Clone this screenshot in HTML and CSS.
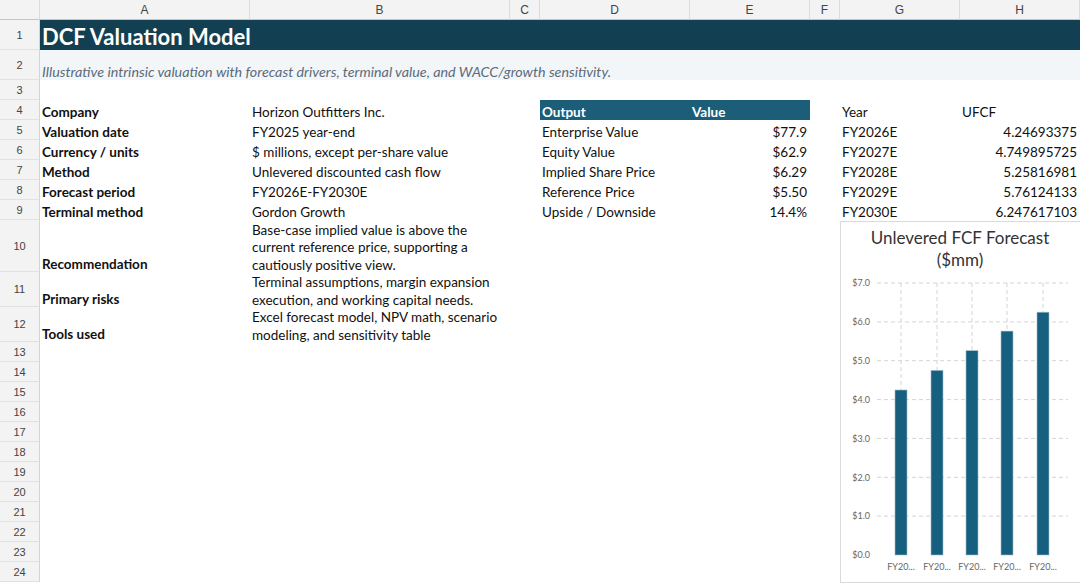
FILE: index.html
```html
<!DOCTYPE html>
<html lang="en">
<head>
  <meta charset="UTF-8">
  <meta name="viewport" content="width=device-width, initial-scale=1.0">
  <title>DCF Valuation Model</title>
  <link rel="stylesheet" href="styles.css">
</head>
<body>
  <div class="sheet">
    <div class="row col-head">
      <div class="corner"></div>
      <div class="ch">A</div>
      <div class="ch">B</div>
      <div class="ch">C</div>
      <div class="ch">D</div>
      <div class="ch">E</div>
      <div class="ch">F</div>
      <div class="ch">G</div>
      <div class="ch">H</div>
    </div>

    <div class="row h30">
      <div class="rh">1</div>
      <div class="cell title span-all">DCF Valuation Model</div>
    </div>
    <div class="row h30">
      <div class="rh">2</div>
      <div class="cell subtitle span-all">Illustrative intrinsic valuation with forecast drivers, terminal value, and WACC/growth sensitivity.</div>
    </div>
    <div class="row">
      <div class="rh">3</div>
    </div>

    <div class="row">
      <div class="rh">4</div>
      <div class="cell label">Company</div>
      <div class="cell">Horizon Outfitters Inc.</div>
      <div class="cell"></div>
      <div class="cell out-head">Output</div>
      <div class="cell out-head">Value</div>
      <div class="cell"></div>
      <div class="cell">Year</div>
      <div class="cell">UFCF</div>
    </div>
    <div class="row">
      <div class="rh">5</div>
      <div class="cell label">Valuation date</div>
      <div class="cell">FY2025 year-end</div>
      <div class="cell"></div>
      <div class="cell">Enterprise Value</div>
      <div class="cell num">$77.9</div>
      <div class="cell"></div>
      <div class="cell">FY2026E</div>
      <div class="cell num">4.24693375</div>
    </div>
    <div class="row">
      <div class="rh">6</div>
      <div class="cell label">Currency / units</div>
      <div class="cell">$ millions, except per-share value</div>
      <div class="cell"></div>
      <div class="cell">Equity Value</div>
      <div class="cell num">$62.9</div>
      <div class="cell"></div>
      <div class="cell">FY2027E</div>
      <div class="cell num">4.749895725</div>
    </div>
    <div class="row">
      <div class="rh">7</div>
      <div class="cell label">Method</div>
      <div class="cell">Unlevered discounted cash flow</div>
      <div class="cell"></div>
      <div class="cell">Implied Share Price</div>
      <div class="cell num">$6.29</div>
      <div class="cell"></div>
      <div class="cell">FY2028E</div>
      <div class="cell num">5.25816981</div>
    </div>
    <div class="row">
      <div class="rh">8</div>
      <div class="cell label">Forecast period</div>
      <div class="cell">FY2026E-FY2030E</div>
      <div class="cell"></div>
      <div class="cell">Reference Price</div>
      <div class="cell num">$5.50</div>
      <div class="cell"></div>
      <div class="cell">FY2029E</div>
      <div class="cell num">5.76124133</div>
    </div>
    <div class="row">
      <div class="rh">9</div>
      <div class="cell label">Terminal method</div>
      <div class="cell">Gordon Growth</div>
      <div class="cell"></div>
      <div class="cell">Upside / Downside</div>
      <div class="cell num">14.4%</div>
      <div class="cell"></div>
      <div class="cell">FY2030E</div>
      <div class="cell num">6.247617103</div>
    </div>
    <div class="row h52">
      <div class="rh">10</div>
      <div class="cell label">Recommendation</div>
      <div class="cell wrap"><span>Base-case implied value is above the current reference price, supporting a cautiously positive view.</span></div>
    </div>
    <div class="row h35">
      <div class="rh">11</div>
      <div class="cell label">Primary risks</div>
      <div class="cell wrap"><span>Terminal assumptions, margin expansion execution, and working capital needs.</span></div>
    </div>
    <div class="row h35">
      <div class="rh">12</div>
      <div class="cell label">Tools used</div>
      <div class="cell wrap"><span>Excel forecast model, NPV math, scenario modeling, and sensitivity table</span></div>
    </div>
    <div class="row"><div class="rh">13</div></div>
    <div class="row"><div class="rh">14</div></div>
    <div class="row"><div class="rh">15</div></div>
    <div class="row"><div class="rh">16</div></div>
    <div class="row"><div class="rh">17</div></div>
    <div class="row"><div class="rh">18</div></div>
    <div class="row"><div class="rh">19</div></div>
    <div class="row"><div class="rh">20</div></div>
    <div class="row"><div class="rh">21</div></div>
    <div class="row"><div class="rh">22</div></div>
    <div class="row"><div class="rh">23</div></div>
    <div class="row"><div class="rh">24</div></div>

    <!-- chart object floats over G10:H24 -->
    <div class="chart">
      <svg width="242" height="362" viewBox="0 0 242 362">
        <text class="chart-title" x="120" y="23">Unlevered FCF Forecast</text>
        <text class="chart-title" x="120" y="45">($mm)</text>

        <g class="grid">
          <line x1="37" y1="62" x2="228" y2="62"/>
          <line x1="37" y1="100.9" x2="228" y2="100.9"/>
          <line x1="37" y1="139.7" x2="228" y2="139.7"/>
          <line x1="37" y1="178.6" x2="228" y2="178.6"/>
          <line x1="37" y1="217.4" x2="228" y2="217.4"/>
          <line x1="37" y1="256.3" x2="228" y2="256.3"/>
          <line x1="37" y1="295.1" x2="228" y2="295.1"/>
          <line x1="61" y1="62" x2="61" y2="169"/>
          <line x1="97" y1="62" x2="97" y2="149"/>
          <line x1="132" y1="62" x2="132" y2="130"/>
          <line x1="167" y1="62" x2="167" y2="110"/>
          <line x1="203" y1="62" x2="203" y2="91"/>
        </g>

        <g class="ylab">
          <text x="30" y="65">$7.0</text>
          <text x="30" y="104">$6.0</text>
          <text x="30" y="143">$5.0</text>
          <text x="30" y="182">$4.0</text>
          <text x="30" y="221">$3.0</text>
          <text x="30" y="260">$2.0</text>
          <text x="30" y="298">$1.0</text>
          <text x="30" y="337">$0.0</text>
        </g>

        <g class="bars">
          <rect x="55" y="169" width="12" height="165"/>
          <rect x="91" y="149.4" width="12" height="184.6"/>
          <rect x="126" y="129.7" width="12" height="204.3"/>
          <rect x="161" y="110.1" width="12" height="223.9"/>
          <rect x="197" y="91.2" width="12" height="242.8"/>
        </g>

        <g class="xlab">
          <text x="61" y="349">FY20...</text>
          <text x="97" y="349">FY20...</text>
          <text x="132" y="349">FY20...</text>
          <text x="167" y="349">FY20...</text>
          <text x="203" y="349">FY20...</text>
        </g>
      </svg>
    </div>
  </div>
</body>
</html>
```

FILE: styles.css
```css
body {
  margin: 0;
  padding: 0;
  background-color: white;
  font-family: Lato, "Open Sans", sans-serif;
  font-size: 13.5px;
  color: #111;
  overflow: hidden;
}
.sheet {
  position: relative;
  width: 1080px;
  height: 583px;
}
.row {
  display: grid;
  grid-template-columns: 40px 210px 260px 30px 150px 120px 30px 120px 120px;
  height: 20px;
}
.h30 {
  height: 30px;
}
.h35 {
  height: 35px;
}
.h52 {
  height: 52px;
}

/* headers */
.corner,
.ch,
.rh {
  background-color: #f3f3f3;
  font-family: "Liberation Sans", Arial, sans-serif;
  color: #444;
  box-sizing: border-box;
  display: flex;
  align-items: center;
  justify-content: center;
}
.corner,
.ch {
  border-right: 1px solid #dcdcdc;
  border-bottom: 1px solid #c4c4c4;
  font-size: 12px;
}
.rh {
  border-right: 1px solid #d4d4d4;
  border-bottom: 1px solid #e0e0e0;
  font-size: 11px;
}

/* cells */
.cell {
  display: flex;
  align-items: flex-end;
  padding: 0 2px;
  white-space: nowrap;
  overflow: visible;
  line-height: 16px;
}
.span-all {
  grid-column: 2 / -1;
}
.title {
  background-color: #133f52;
  color: white;
  font-weight: bold;
  font-size: 22px;
  align-items: center;
  padding-top: 3px;
  box-sizing: border-box;
}
.subtitle {
  background-color: #f2f6f9;
  color: #5b6b79;
  font-style: italic;
  font-size: 14.3px;
  padding-bottom: 0;
}
.label {
  font-weight: bold;
}
.num {
  justify-content: flex-end;
  padding-right: 3px;
}
.out-head {
  background-color: #1c5e78;
  color: white;
  font-weight: bold;
}
.wrap {
  white-space: normal;
  line-height: 17.5px;
  padding-right: 8px;
}
.wrap span {
  margin-bottom: -2px;
}

/* chart */
.chart {
  position: absolute;
  left: 840px;
  top: 221px;
  width: 242px;
  height: 362px;
  background-color: white;
  border: 1px solid #dadada;
  box-sizing: border-box;
}
.chart svg {
  display: block;
  margin: -1px 0 0 -1px;
}
.chart-title {
  font-family: Lato, sans-serif;
  font-size: 17px;
  fill: #333;
  text-anchor: middle;
}
.grid line {
  stroke: #d4d4d4;
  stroke-width: 1;
  stroke-dasharray: 4 3;
}
.ylab text {
  font-family: Lato, sans-serif;
  font-size: 9px;
  fill: #666;
  text-anchor: end;
}
.xlab text {
  font-family: Lato, sans-serif;
  font-size: 9px;
  fill: #666;
  text-anchor: middle;
}
.bars rect {
  fill: #165f7e;
  stroke: #9dbccb;
  stroke-width: 0.6;
}
```
